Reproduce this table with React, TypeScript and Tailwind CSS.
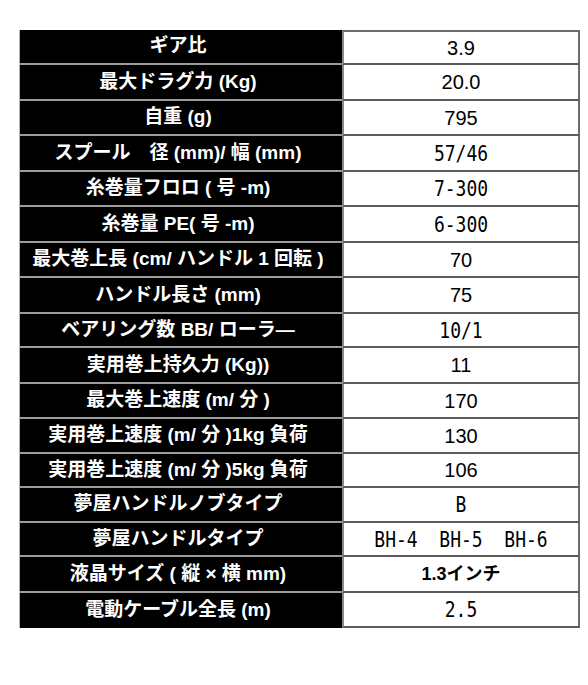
const rows: { label: string; value: string; h: string; mono?: boolean; bold?: boolean }[] = [
  { label: 'ギア比', value: '3.9', h: 'h-[35px]' },
  { label: '最大ドラグ力 (Kg)', value: '20.0', h: 'h-[36px]' },
  { label: '自重 (g)', value: '795', h: 'h-[35px]' },
  { label: 'スプール　径 (mm)/ 幅 (mm)', value: '57/46', h: 'h-[36px]', mono: true },
  { label: '糸巻量フロロ ( 号 -m)', value: '7-300', h: 'h-[35px]', mono: true },
  { label: '糸巻量 PE( 号 -m)', value: '6-300', h: 'h-[36px]', mono: true },
  { label: '最大巻上長 (cm/ ハンドル 1 回転 )', value: '70', h: 'h-[35px]' },
  { label: 'ハンドル長さ (mm)', value: '75', h: 'h-[36px]' },
  { label: 'ベアリング数 BB/ ローラ―', value: '10/1', h: 'h-[34px]', mono: true },
  { label: '実用巻上持久力 (Kg))', value: '11', h: 'h-[36px]' },
  { label: '最大巻上速度 (m/ 分 )', value: '170', h: 'h-[35px]' },
  { label: '実用巻上速度 (m/ 分 )1kg 負荷', value: '130', h: 'h-[35px]' },
  { label: '実用巻上速度 (m/ 分 )5kg 負荷', value: '106', h: 'h-[34px]' },
  { label: '夢屋ハンドルノブタイプ', value: 'B', h: 'h-[35px]', mono: true },
  { label: '夢屋ハンドルタイプ', value: 'BH-4  BH-5  BH-6', h: 'h-[34px]', mono: true },
  { label: '液晶サイズ ( 縦 × 横 mm)', value: '1.3インチ', h: 'h-[36px]', bold: true },
  { label: '電動ケーブル全長 (m)', value: '2.5', h: 'h-[35px]', mono: true },
]

export default function App() {
  return (
    <div className="w-[588px] h-[685px] bg-white pt-[30px] pl-[19px]">
      <div className="w-[561px] flex flex-col border-l border-[#b5b5b5]">
        {rows.map((r, i) => (
          <div key={i} className={`flex ${r.h}`}>
            {/* label */}
            <div
              className={`w-[322px] bg-black text-white font-bold text-[19px] flex items-center justify-center pr-[6px] font-['Liberation_Sans','Noto_Sans_CJK_JP',sans-serif] ${
                i === rows.length - 1 ? '' : 'border-b-2 border-[#9c9c9c]'
              }`}
            >
              {r.label}
            </div>
            {/* value */}
            <div
              className={`flex-1 bg-white text-black flex items-center justify-center whitespace-pre border-l-2 border-r-2 border-l-[#8a8a8a] border-r-[#6b6b6b] ${
                i === 0 ? 'border-t-2 border-t-[#6b6b6b]' : ''
              } border-b-2 border-b-[#5c5c5c]`}
            >
              {r.mono ? (
                <span className="inline-block scale-y-[1.15] font-['DejaVu_Sans_Mono','Noto_Sans_CJK_JP',monospace] text-[18px]">
                  {r.value}
                </span>
              ) : r.bold ? (
                <span className="font-['Liberation_Sans','Noto_Sans_CJK_JP',sans-serif] font-bold text-[18px]">
                  {r.value}
                </span>
              ) : (
                <span className="font-['Liberation_Sans','Noto_Sans_CJK_JP',sans-serif] text-[20px]">
                  {r.value}
                </span>
              )}
            </div>
          </div>
        ))}
      </div>
    </div>
  )
}
